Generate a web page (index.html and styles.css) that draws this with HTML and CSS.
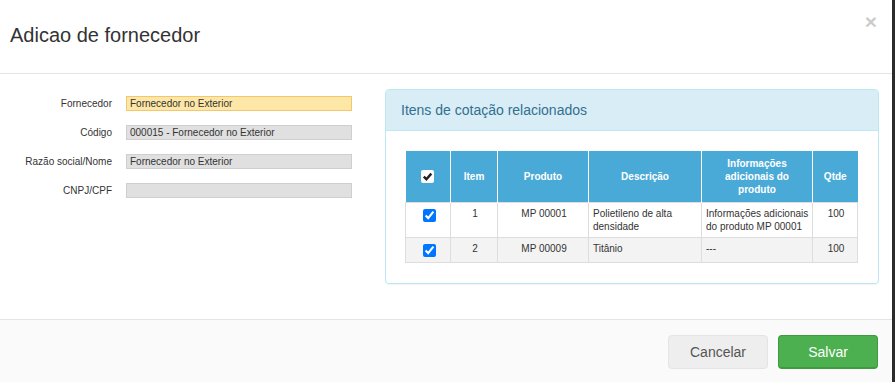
FILE: index.html
```html
<!DOCTYPE html>
<html lang="pt-BR">
<head>
    <meta charset="UTF-8">
    <meta name="viewport" content="width=device-width, initial-scale=1.0">
    <title>Adicao de fornecedor</title>
    <link rel="stylesheet" href="styles.css">
</head>
<body>
<div class="modal">
    <div class="modal-header">
        <h4 class="modal-title">Adicao de fornecedor</h4>
        <button class="close" type="button">&times;</button>
    </div>

    <div class="modal-body">
        <!-- dados do fornecedor -->
        <div class="form">
            <div class="form-row">
                <label for="fornecedor">Fornecedor</label>
                <input id="fornecedor" class="input input-warning" value="Fornecedor no Exterior">
            </div>
            <div class="form-row">
                <label for="codigo">Código</label>
                <input id="codigo" class="input" value="000015 - Fornecedor no Exterior" readonly>
            </div>
            <div class="form-row">
                <label for="razao">Razão social/Nome</label>
                <input id="razao" class="input" value="Fornecedor no Exterior" readonly>
            </div>
            <div class="form-row">
                <label for="cnpj">CNPJ/CPF</label>
                <input id="cnpj" class="input" value="" readonly>
            </div>
        </div>

        <!-- itens de cotação -->
        <div class="panel">
            <div class="panel-heading">Itens de cotação relacionados</div>
            <div class="panel-body">
                <table>
                    <colgroup>
                        <col style="width: 45px">
                        <col style="width: 47px">
                        <col style="width: 91px">
                        <col style="width: 113px">
                        <col style="width: 111px">
                        <col style="width: 45px">
                    </colgroup>
                    <thead>
                    <tr>
                        <th>
                            <svg class="check-all" width="13" height="13" viewBox="0 0 13 13">
                                <rect x="0" y="0" width="13" height="13" rx="2" fill="#fff"/>
                                <path d="M2.8 6.6 L5.4 9.2 L10.3 3.6" fill="none" stroke="#222" stroke-width="2.4"/>
                            </svg>
                        </th>
                        <th>Item</th>
                        <th>Produto</th>
                        <th>Descrição</th>
                        <th>Informações adicionais do produto</th>
                        <th>Qtde</th>
                    </tr>
                    </thead>
                    <tbody>
                    <tr>
                        <td class="center"><input type="checkbox" checked></td>
                        <td class="center">1</td>
                        <td class="center">MP 00001</td>
                        <td>Polietileno de alta densidade</td>
                        <td>Informações adicionais do produto MP 00001</td>
                        <td class="center">100</td>
                    </tr>
                    <tr>
                        <td class="center"><input type="checkbox" checked></td>
                        <td class="center">2</td>
                        <td class="center">MP 00009</td>
                        <td>Titânio</td>
                        <td>---</td>
                        <td class="center">100</td>
                    </tr>
                    </tbody>
                </table>
            </div>
        </div>
    </div>

    <div class="modal-footer">
        <button class="btn btn-default" type="button">Cancelar</button>
        <button class="btn btn-success" type="button">Salvar</button>
    </div>
</div>
</body>
</html>
```

FILE: styles.css
```css
body {
    margin: 0;
    background-color: #2b2b2b;
    font-family: "Liberation Sans", Arial, sans-serif;
    color: #333;
    overflow: hidden;
}
.modal {
    width: 892px;
    background-color: #fff;
}
.modal-header {
    display: flex;
    justify-content: space-between;
    align-items: flex-start;
    padding: 24px 15px 27px 10px;
    border-bottom: 1px solid #e5e5e5;
}
.modal-title {
    margin: 0;
    font-size: 20px;
    font-weight: normal;
    line-height: 22px;
}
.close {
    margin-top: -13px;
    padding: 0;
    border: none;
    background: none;
    font-family: "Liberation Sans", Arial, sans-serif;
    font-size: 21px;
    font-weight: bold;
    line-height: 1;
    color: #000;
    opacity: 0.2;
}
.modal-body {
    display: grid;
    grid-template-columns: 370px 1fr;
    align-items: start;
    padding: 15px;
}
/* formulário da esquerda */
.form {
    display: flex;
    flex-direction: column;
    gap: 14px;
    padding-top: 7px;
}
.form-row {
    display: grid;
    grid-template-columns: 97px 226px;
    column-gap: 14px;
    align-items: center;
    font-size: 10px;
}
.form-row label {
    text-align: right;
}
.input {
    height: 15px;
    box-sizing: border-box;
    margin: 0;
    padding: 0 3px;
    border: 1px solid #cfcfcf;
    background-color: #e0e0e0;
    font-family: "Liberation Sans", Arial, sans-serif;
    font-size: 10px;
    color: #333;
    outline: none;
}
.input-warning {
    border-color: #f3c76e;
    background-color: #fde7a6;
}
/* painel de itens */
.panel {
    margin-bottom: 20px;
    border: 1px solid #bce8f1;
    border-radius: 4px;
    box-shadow: 0 1px 1px rgba(0, 0, 0, 0.05);
}
.panel-heading {
    padding: 10px 15px;
    border-bottom: 1px solid #bce8f1;
    border-radius: 3px 3px 0 0;
    background-color: #d9edf7;
    color: #31708f;
    font-size: 14px;
    line-height: 20px;
}
.panel-body {
    padding: 20px 20px 20px 19px;
}
table {
    width: 100%;
    table-layout: fixed;
    border-collapse: collapse;
    font-size: 10px;
    line-height: 13px;
}
th {
    padding: 6px 4px;
    border-left: 1px solid #fff;
    background-color: #4aaad7;
    color: #fff;
    font-weight: bold;
    text-align: center;
    vertical-align: middle;
}
th:first-child {
    border-left: none;
}
.check-all {
    display: block;
    margin: 0 auto;
}
td {
    padding: 4px 2px 4px 4px;
    border: 1px solid #ddd;
    vertical-align: top;
}
tbody tr:nth-child(even) {
    background-color: #f3f3f3;
}
td.center {
    text-align: center;
}
td input[type="checkbox"] {
    width: 13px;
    height: 13px;
    margin: 2px 0 1px;
    vertical-align: top;
}
/* rodapé */
.modal-footer {
    display: flex;
    justify-content: flex-end;
    gap: 10px;
    padding: 15px 14px;
    border-top: 1px solid #e5e5e5;
    background-color: #fafafa;
}
.btn {
    width: 100px;
    padding: 6px 12px;
    border: 1px solid transparent;
    border-radius: 4px;
    font-family: "Liberation Sans", Arial, sans-serif;
    font-size: 14px;
    line-height: 20px;
    cursor: pointer;
}
.btn-default {
    border-color: #e4e4e4;
    background-color: #eee;
    color: #555;
}
.btn-success {
    padding-bottom: 5px;
    border-color: #3e9c3e;
    border-bottom-width: 2px;
    background-color: #4cb050;
    color: #fff;
}
```
